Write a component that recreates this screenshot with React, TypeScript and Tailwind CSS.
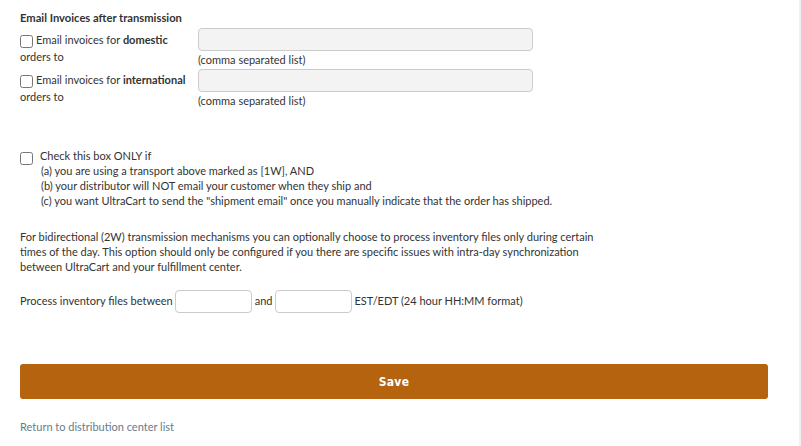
import React from "react";

function Cb() {
  return (
    <input
      type="checkbox"
      className="m-0 h-[13px] w-[13px] shrink-0 align-middle"
    />
  );
}

export default function App() {
  return (
    <div
      className="flex h-[446px] w-[801px] overflow-hidden bg-white text-[#333]"
      style={{ fontFamily: "Lato, 'Noto Sans', sans-serif" }}
    >
      <div className="flex-1 pl-[20px] pr-[31px]">
        <div className="pt-[10px] text-[11.2px] font-bold leading-[16px]">
          Email Invoices after transmission
        </div>

        <div className="mt-[2px] flex">
          <label className="w-[170px] pt-[4px] text-[11px] leading-[16px]">
            <span className="relative top-[-1px] mr-[3px] inline-block align-middle">
              <Cb />
            </span>
            Email invoices for <b>domestic</b> orders to
          </label>
          <div className="ml-[8px]">
            <input className="block h-[23px] w-[335px] rounded-[4px] border border-[#ccc] bg-[#f3f3f3]" />
            <div className="mt-[1px] text-[11px] leading-[15px]">(comma separated list)</div>
          </div>
        </div>

        <div className="mt-[2px] flex">
          <label className="w-[170px] pt-[3px] text-[11px] leading-[16px]">
            <span className="relative top-[-1px] mr-[3px] inline-block align-middle">
              <Cb />
            </span>
            Email invoices for <b>international</b> orders to
          </label>
          <div className="ml-[8px]">
            <input className="block h-[23px] w-[335px] rounded-[4px] border border-[#ccc] bg-[#f3f3f3]" />
            <div className="mt-[1px] text-[11px] leading-[15px]">(comma separated list)</div>
          </div>
        </div>

        <div className="mt-[40px] flex text-[11px] leading-[15px]">
          <div className="w-[20px] pt-[1px]">
            <Cb />
          </div>
          <div>
            <div>Check this box ONLY if</div>
            <div className="pl-[1px]">
              <div>(a) you are using a transport above marked as [1W], AND</div>
              <div>(b) your distributor will NOT email your customer when they ship and</div>
              <div>
                (c) you want UltraCart to send the "shipment email" once you manually indicate that the order has
                shipped.
              </div>
            </div>
          </div>
        </div>

        <p className="mt-[21px] w-[602px] text-[11px] leading-[15px]">
          For bidirectional (2W) transmission mechanisms you can optionally choose to process inventory files only
          during certain times of the day. This option should only be configured if you there are specific issues with
          intra-day synchronization between UltraCart and your fulfillment center.
        </p>

        <div className="mt-[16px] flex items-center text-[11px]">
          <span>Process inventory files between</span>
          <input className="ml-[2px] h-[23px] w-[77px] rounded-[4px] border border-[#ccc] bg-white" />
          <span className="ml-[3px] mr-[2px]">and</span>
          <input className="h-[23px] w-[77px] rounded-[4px] border border-[#ccc] bg-white" />
          <span className="ml-[3px]">EST/EDT (24 hour HH:MM format)</span>
        </div>

        <button
          className="mt-[51px] flex h-[35px] w-[748px] items-center justify-center rounded-[3px] bg-[#b5630f] text-[12px] font-bold tracking-[0.3px] text-white"
          style={{ fontFamily: "'Liberation Sans Narrow', 'DejaVu Sans Condensed', Roboto, sans-serif" }}
        >
          Save
        </button>

        <div className="mt-[20px] text-[11px] text-[#6a7a88]">
          Return to distribution center list
        </div>
      </div>
      <div className="w-[2px] bg-[#efefef]" />
    </div>
  );
}
